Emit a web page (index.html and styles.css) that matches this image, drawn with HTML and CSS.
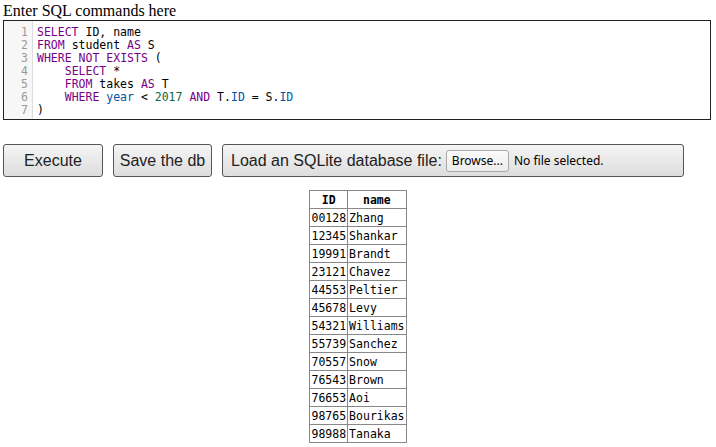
FILE: index.html
```html
<!DOCTYPE html>
<html>
<head>
<meta charset="utf-8">
<link rel="stylesheet" href="styles.css">
</head>
<body>
<div class="page">
  <div class="label">Enter SQL commands here</div>
  <div class="editor">
    <div class="gutter">
      <div>1</div><div>2</div><div>3</div><div>4</div><div>5</div><div>6</div><div>7</div>
    </div>
    <div class="code">
      <div class="line"><span class="kw">SELECT</span> ID, name</div>
      <div class="line"><span class="kw">FROM</span> student <span class="kw">AS</span> S</div>
      <div class="line"><span class="kw">WHERE</span> <span class="kw">NOT</span> <span class="kw">EXISTS</span> (</div>
      <div class="line">    <span class="kw">SELECT</span> *</div>
      <div class="line">    <span class="kw">FROM</span> takes <span class="kw">AS</span> T</div>
      <div class="line">    <span class="kw">WHERE</span> <span class="bi">year</span> &lt; <span class="num">2017</span> <span class="kw">AND</span> T.<span class="bi">ID</span> = S.<span class="bi">ID</span></div>
      <div class="line">)</div>
    </div>
  </div>
  <div class="actions">
    <button class="btn btn-exec">Execute</button>
    <button class="btn btn-save">Save the db</button>
    <div class="btn btn-load">
      <span>Load an SQLite database file:</span>
      <span class="browse">Browse...</span>
      <span class="nofile">No file selected.</span>
    </div>
  </div>
  <table class="result">
    <thead><tr><th>ID</th><th>name</th></tr></thead>
    <tbody>
      <tr><td>00128</td><td>Zhang</td></tr>
      <tr><td>12345</td><td>Shankar</td></tr>
      <tr><td>19991</td><td>Brandt</td></tr>
      <tr><td>23121</td><td>Chavez</td></tr>
      <tr><td>44553</td><td>Peltier</td></tr>
      <tr><td>45678</td><td>Levy</td></tr>
      <tr><td>54321</td><td>Williams</td></tr>
      <tr><td>55739</td><td>Sanchez</td></tr>
      <tr><td>70557</td><td>Snow</td></tr>
      <tr><td>76543</td><td>Brown</td></tr>
      <tr><td>76653</td><td>Aoi</td></tr>
      <tr><td>98765</td><td>Bourikas</td></tr>
      <tr><td>98988</td><td>Tanaka</td></tr>
    </tbody>
  </table>
</div>
</body>
</html>
```
FILE: styles.css
```css
html, body {
  margin: 0;
  padding: 0;
  background: #fff;
}
.page {
  padding: 0 3px;
  width: 710px;
}
.label {
  font-family: "Liberation Serif", serif;
  font-size: 16px;
  line-height: 18px;
  color: #000;
  margin-top: 2px;
}
.editor {
  width: 708px;
  box-sizing: border-box;
  border: 1px solid #222;
  display: flex;
  font-family: "DejaVu Sans Mono", monospace;
  font-size: 11.5px;
  line-height: 13px;
  height: 100px;
}
.gutter {
  background: #f7f7f7;
  border-right: 1px solid #ddd;
  width: 29px;
  box-sizing: border-box;
  padding: 5px 4px 0 0;
  text-align: right;
  color: #999;
}
.code {
  padding: 5px 0 0 4px;
  color: #000;
}
.line { white-space: pre; }
.kw { color: #770088; }
.bi { color: #0055aa; }
.num { color: #116644; }
.actions {
  display: flex;
  gap: 10px;
  margin-top: 24px;
}
.btn {
  box-sizing: border-box;
  height: 33px;
  border: 1px solid #555;
  border-radius: 3px;
  background: linear-gradient(#f5f5f5, #dddddd);
  font-family: "Liberation Sans", Arial, sans-serif;
  font-size: 16px;
  color: #222;
  padding: 0;
  display: flex;
  align-items: center;
  justify-content: center;
}
.btn-exec { width: 100px; }
.btn-save { width: 99px; }
.btn-load {
  width: 462px;
  justify-content: flex-start;
  padding-left: 8px;
}
.browse {
  font-family: "Noto Sans", sans-serif;
  font-size: 12px;
  border: 1px solid #aaa;
  border-radius: 3px;
  background: linear-gradient(#fbfbfb, #ececec);
  height: 22px;
  box-sizing: border-box;
  padding: 0 5px;
  display: flex;
  align-items: center;
  margin-left: 4px;
  color: #000;
}
.nofile {
  font-family: "Noto Sans", sans-serif;
  font-size: 12px;
  margin-left: 5px;
  color: #000;
}
.result {
  margin: 13px auto 0;
  border-collapse: collapse;
  font-family: "DejaVu Sans Mono", monospace;
  font-size: 11.5px;
  line-height: 16px;
}
.result th, .result td {
  border: 1px solid #888;
  padding: 0 1px;
  height: 18px;
  box-sizing: border-box;
}
.result th {
  font-weight: bold;
  text-align: center;
}
.result td { text-align: left; }
```
